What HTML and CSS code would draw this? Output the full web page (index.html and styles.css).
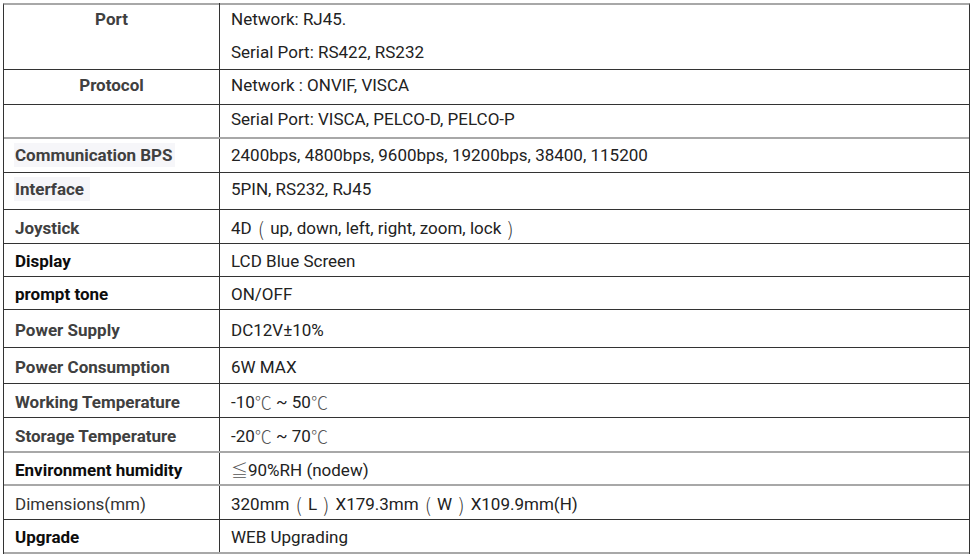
FILE: index.html
```html
<!DOCTYPE html>
<html lang="en">
<head>
<meta charset="utf-8">
<title>Specifications</title>
<link rel="stylesheet" href="styles.css">
</head>
<body>
<div class="spec">
  <div class="row h65 top-align">
    <div class="key center gray">Port</div>
    <div class="val">
      <div class="line">Network: RJ45.</div>
      <div class="line">Serial Port: RS422, RS232</div>
    </div>
  </div>
  <div class="row h35 raise">
    <div class="key center gray">Protocol</div>
    <div class="val">Network : ONVIF, VISCA</div>
  </div>
  <div class="row h34 soft raise">
    <div class="key"></div>
    <div class="val">Serial Port: VISCA, PELCO-D, PELCO-P</div>
  </div>
  <div class="row h34 lift">
    <div class="key gray"><span class="hl">Communication BPS</span></div>
    <div class="val">2400bps, 4800bps, 9600bps, 19200bps, 38400, 115200</div>
  </div>
  <div class="row h37 raise">
    <div class="key gray"><span class="hl">Interface&nbsp;</span></div>
    <div class="val">5PIN, RS232, RJ45</div>
  </div>
  <div class="row h34">
    <div class="key gray">Joystick</div>
    <div class="val">4D <span class="paren">(</span> up, down, left, right, zoom, lock <span class="paren">)</span></div>
  </div>
  <div class="row h33">
    <div class="key dark">Display</div>
    <div class="val">LCD Blue Screen</div>
  </div>
  <div class="row h33">
    <div class="key dark">prompt tone</div>
    <div class="val">ON/OFF</div>
  </div>
  <div class="row h38">
    <div class="key gray">Power Supply</div>
    <div class="val">DC12V±10%</div>
  </div>
  <div class="row h36">
    <div class="key gray">Power Consumption</div>
    <div class="val">6W MAX</div>
  </div>
  <div class="row h34">
    <div class="key gray">Working Temperature</div>
    <div class="val">-10<span class="unit">℃</span>&nbsp;~ 50<span class="unit">℃</span></div>
  </div>
  <div class="row h35 soft">
    <div class="key gray">Storage Temperature</div>
    <div class="val">-20<span class="unit">℃</span>&nbsp;~ 70<span class="unit">℃</span></div>
  </div>
  <div class="row h33 soft">
    <div class="key dark">Environment humidity</div>
    <div class="val"><span class="unit">≦</span>90%RH (nodew)</div>
  </div>
  <div class="row h34">
    <div class="key gray regular">Dimensions(mm)</div>
    <div class="val">320mm <span class="paren">(</span> L <span class="paren">)</span> X179.3mm <span class="paren">(</span> W <span class="paren">)</span> X109.9mm(H)</div>
  </div>
  <div class="row h34 soft">
    <div class="key dark">Upgrade</div>
    <div class="val">WEB Upgrading</div>
  </div>
</div>
</body>
</html>
```

FILE: styles.css
```css
html, body {
  margin: 0;
  padding: 0;
  background: #ffffff;
}

body {
  font-family: "Roboto", "Noto Sans CJK SC", sans-serif;
  font-size: 17px;
  color: #222222;
}

.spec {
  margin: 3px 0 0 3px;
  width: 967px;
  box-sizing: border-box;
  border-top: 2px solid #a8a8a8;
  border-left: 1px solid #333333;
  border-right: 1px solid #333333;
}

.row {
  display: grid;
  grid-template-columns: 216px 1fr;
  box-sizing: border-box;
  border-bottom: 1px solid #333333;
}

.row.soft {
  border-bottom: 2px solid #a8a8a8;
}

.h33 { height: 33px; }
.h34 { height: 34px; }
.h35 { height: 35px; }
.h36 { height: 36px; }
.h37 { height: 37px; }
.h38 { height: 38px; }
.h65 { height: 65px; }

.key,
.val {
  display: flex;
  align-items: center;
  padding-top: 2px;
  box-sizing: border-box;
  white-space: pre;
}

.key {
  border-right: 1px solid #333333;
  padding-left: 11px;
  font-weight: 700;
}

.val {
  padding-left: 11px;
}

.raise .key,
.raise .val {
  padding-top: 0;
  padding-bottom: 4px;
}

.lift .key,
.lift .val {
  padding-top: 0;
  padding-bottom: 2px;
}

.top-align .key,
.top-align .val {
  align-items: flex-start;
  padding-top: 0;
}

.top-align .key {
  line-height: 33px;
  margin-top: -2px;
}

.top-align .val {
  flex-direction: column;
  margin-top: -2px;
}

.line {
  line-height: 33px;
}

.key.center {
  justify-content: center;
  padding-left: 0;
}

.gray {
  color: #404040;
}

.dark {
  color: #0d0d0d;
}

.regular {
  font-weight: 400;
  color: #333333;
}

.hl {
  background: #f6f6f9;
  padding: 2px 2px 2px 1px;
  margin-left: -1px;
}

.paren {
  font-family: "Noto Sans CJK SC", sans-serif;
  font-size: 19px;
  font-weight: 300;
  color: #333333;
  margin: 0 2px;
  line-height: 1;
}

.unit {
  font-family: "Noto Sans CJK SC", sans-serif;
  font-weight: 300;
  color: #555555;
}
```
